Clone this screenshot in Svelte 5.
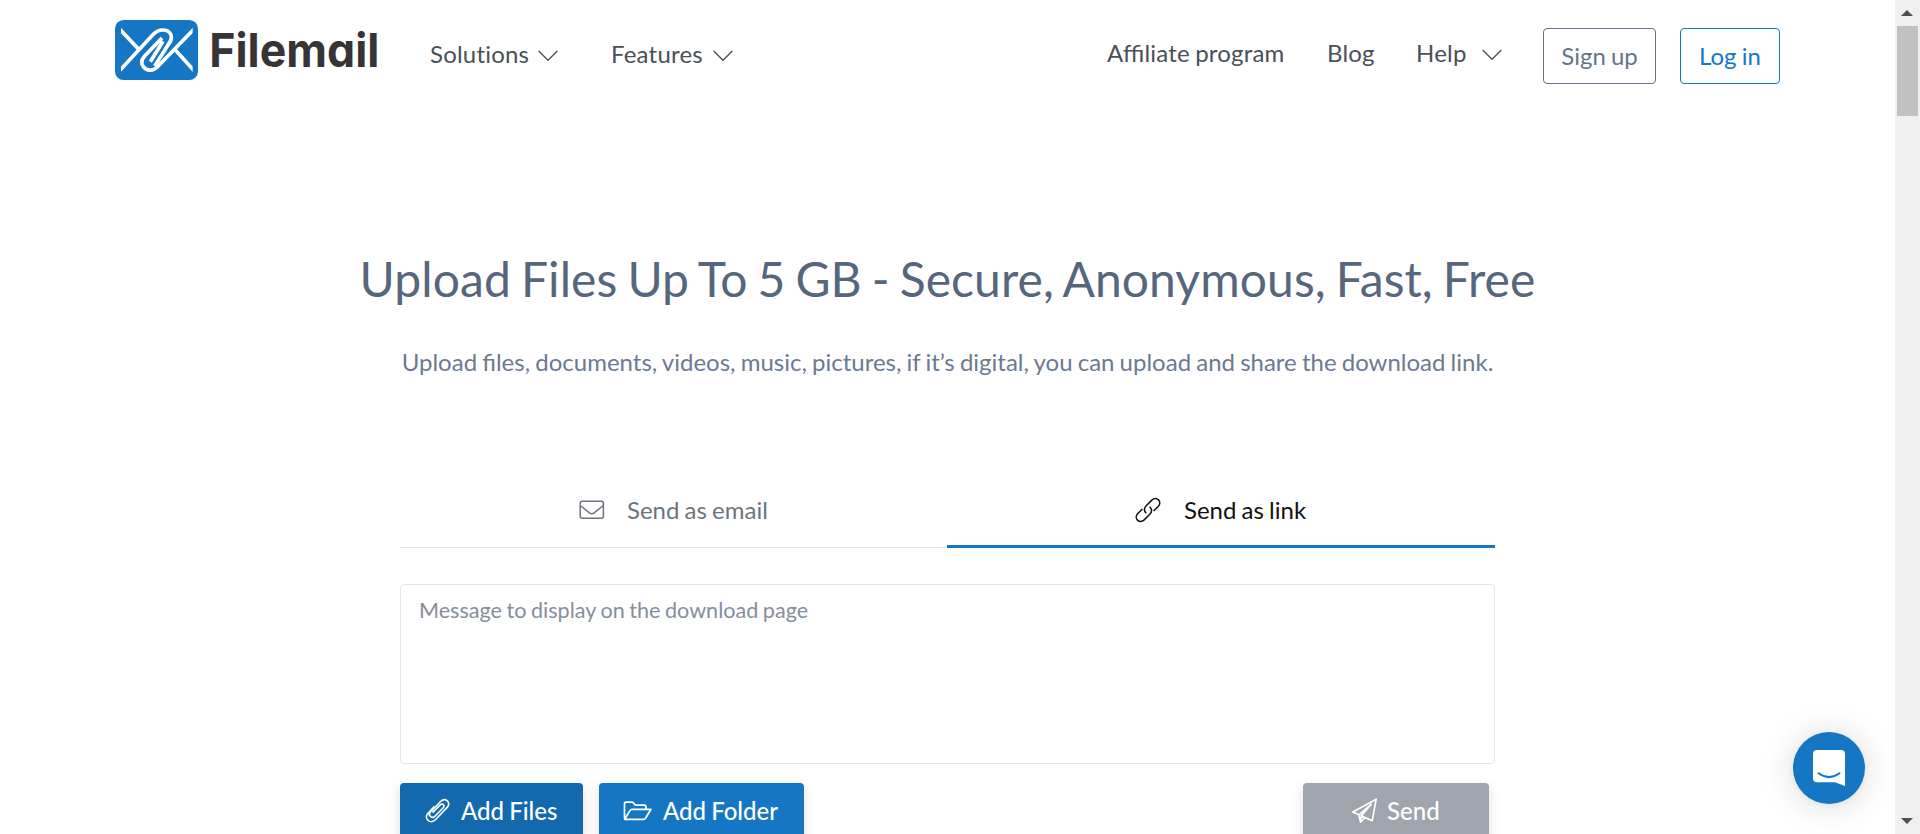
<script>
  const left = [
    { label: 'Solutions', cls: 'solutions' },
    { label: 'Features', cls: 'features' }
  ];
</script>

{#snippet chevron()}
  <svg class="chev" width="20" height="12" viewBox="0 0 20 12"><path d="M.7 1 10 10.3 19.3 1" /></svg>
{/snippet}

<div class="window">
  <main>
    <header>
      <svg class="logo" width="263" height="62" viewBox="45 60 789 186">
        <clipPath id="flaps"><rect x="63" y="70" width="215" height="160" /></clipPath>
        <rect x="45" y="60" width="249" height="180" rx="26" fill="#1577c4" />
        <g fill="none" stroke="#fff" stroke-width="11" clip-path="url(#flaps)">
          <path d="M56 84 116 148M56 215 160 103C176 86 201 86 211 101 218 113 213 124 204 135L164 198" />
          <path d="M285 84 172 201C159 214 139 213 130 200 122 189 125 178 134 168L186 114" />
          <path d="M224 148 285 215M151 185 189 124" />
        </g>
        <text x="328" y="202" textLength="510" lengthAdjust="spacingAndGlyphs">Filemail</text>
      </svg>
      <nav class="primary">
        {#each left as item}
          <a class={item.cls}>{item.label}{@render chevron()}</a>
        {/each}
      </nav>
      <nav class="secondary">
        <a class="aff">Affiliate program</a>
        <a class="blog">Blog</a>
        <a class="help">Help{@render chevron()}</a>
      </nav>
      <button class="outline signup">Sign up</button>
      <button class="outline login">Log in</button>
    </header>

    <h1>Upload Files Up To 5 GB - Secure, Anonymous, Fast, Free</h1>
    <p>Upload files, documents, videos, music, pictures, if it’s digital, you can upload and share the download link.</p>

    <section>
      <div class="tabs">
        <div class="tab email">
          <svg width="26" height="20" viewBox="0 0 26 20"><rect x="1.2" y="1.2" width="23.2" height="17" rx="2" /><path d="M1.2 5.5 10.4 12.8Q12.8 14.6 15.2 12.8L24.4 5.5" /></svg>
          <span>Send as email</span>
        </div>
        <div class="tab link">
          <svg width="26" height="26" viewBox="0 0 26 26"><path d="M11.2 16.2C8.8 13.7 9.1 10.9 11.2 8.8L16.8 3.1C19 1 21.8 1.2 23.5 2.9 25.2 4.6 25.2 7.3 23.4 9.2L18.6 14" /><path d="M14.6 9.8C17 12.2 16.9 15.1 14.8 17.2L9.2 22.9C7 25 4.2 24.8 2.5 23.1 .8 21.4 .8 18.7 2.6 16.8L7.4 12" /></svg>
          <span>Send as link</span>
        </div>
      </div>
      <div class="message">Message to display on the download page</div>
      <div class="actions">
        <button class="files">
          <svg width="26" height="26" viewBox="0 0 26 26"><path d="M7.5 14.8 15.4 6.9C17.8 4.7 20.7 7.5 18.5 9.8L10.1 18.4C6.6 21.8 2.2 17.5 5.6 14L15.7 3.4C20.6-1.2 27 4.4 22.8 9.2L10.4 22.2C4.8 27.5-2.1 20.7 3 15.2L9.5 8.4" transform="translate(.3 .2) scale(.97)" /></svg>
          <span>Add Files</span>
        </button>
        <button class="folder">
          <svg width="30" height="20" viewBox="0 0 30 20"><path d="M1.5 17.5V3Q1.5 1.2 3.2 1.2H9.5L12.5 4.2H21Q23 4.2 23 6V8M1.8 18 7 9.5Q7.6 8.3 9 8.3H28L22.5 17.2Q21.9 18.4 20.5 18.4H2.5Q1.5 18.4 1.5 17.4" /></svg>
          <span>Add Folder</span>
        </button>
        <button class="send">
          <svg width="27" height="26" viewBox="0 0 27 26"><path d="M25.2 1.2 1.8 14 7.8 16.8 20.3 6.2 10.2 17.9 21.2 22.7ZM7.8 16.8 9.6 24.2 14 19.5M10.2 17.9 9.6 24.2" /></svg>
          <span>Send</span>
        </button>
      </div>
    </section>
    <button class="chat" aria-label="Chat">
      <svg width="32" height="36" viewBox="0 0 32 36"><path d="M4 0H28Q32 0 32 4V36L22 32.3H4Q0 32.3 0 28.3V4Q0 0 4 0Z" fill="#fff" /><path d="M5.6 23.2Q16 31 26.4 23.2" fill="none" stroke="#1577c4" stroke-width="2" stroke-linecap="round" /></svg>
    </button>
  </main>
  <aside>
    <svg width="12" height="6" viewBox="0 0 12 6"><path d="M0 6 6 0 12 6Z" /></svg>
    <div class="thumb"></div>
    <svg class="down" width="12" height="6" viewBox="0 0 12 6"><path d="M0 0 6 6 12 0Z" /></svg>
  </aside>
</div>

<style>
  :global(body) { margin: 0; overflow: hidden; background: #fff; }
  .window { display: flex; width: 1920px; height: 834px; overflow: hidden; font-family: Lato, sans-serif; font-size: 24px; line-height: 30px; word-spacing: -1px; color: #495057; }
  main { position: relative; width: 1895px; height: 834px; overflow: hidden; }
  header { display: flex; align-items: flex-start; height: 114px; padding-left: 115px; white-space: nowrap; }
  .logo { margin-top: 20px; flex: none; overflow: visible; }
  .logo text { font: 700 141px Inter, sans-serif; font-feature-settings: "cv11" 1; fill: #373435; }
  nav { display: flex; letter-spacing: .2px; font-feature-settings: "liga" 0; }
  nav a { display: flex; align-items: flex-start; }
  .primary { margin: 39px 0 0 52px; }
  .solutions, .features { justify-content: space-between; }
  .solutions { width: 128px; }
  .features { width: 122px; margin-left: 53px; }
  .secondary { margin: 38px 0 0 374px; }
  .aff { width: 220px; font-feature-settings: "liga" 1; }
  .blog { width: 89px; }
  .help { width: 86px; justify-content: space-between; }
  .chev { margin-top: 11px; fill: none; stroke: #495057; stroke-width: 1.3; }
  button { font: 24px/30px Lato, sans-serif; word-spacing: -1px; border: 0; padding: 0; }
  .outline { box-sizing: border-box; height: 56px; margin-top: 28px; border: 1px solid; border-radius: 4px; background: #fff; }
  .signup { width: 113px; margin-left: 41px; color: #64748b; }
  .login { width: 100px; margin-left: 24px; color: #1577c4; }
  h1 { margin: 135px 0 0; text-align: center; font-size: 48px; font-weight: 400; line-height: 60px; word-spacing: -2.4px; letter-spacing: .1px; color: #56667c; white-space: nowrap; }
  p { margin: 38px 0 0; text-align: center; color: #6b7a90; white-space: nowrap; }
  section { width: 1095px; margin: 103px 0 0 400px; }
  .tabs { display: flex; height: 68px; }
  .tab { display: flex; box-sizing: border-box; height: 68px; padding-top: 15px; white-space: nowrap; }
  .tab svg { fill: none; stroke: currentColor; stroke-width: 1.5; flex: none; }
  .email { width: 547px; padding-left: 179px; border-bottom: 1px solid #e5e7e9; color: #6c757d; }
  .email svg { margin: 5px 22px 0 0; }
  .link { width: 548px; padding-left: 188px; border-bottom: 3px solid #1577c4; color: #111; }
  .link svg { margin: 2px 23px 0 0; }
  .message { box-sizing: border-box; height: 180px; margin-top: 36px; padding: 10px 18px; border: 1px solid #e3e5e7; border-radius: 4px; font-size: 21.6px; color: #868e9b; }
  .actions { display: flex; margin-top: 19px; }
  .actions button { display: flex; box-sizing: border-box; height: 58px; padding-top: 13px; border-radius: 4px; color: #fff; font-weight: 500; box-shadow: 0 4px 12px rgba(0,0,0,.13); white-space: nowrap; }
  .actions svg { fill: none; stroke: #fff; stroke-width: 1.7; stroke-linejoin: round; flex: none; }
  .files { width: 183px; padding-left: 25px; background: #1269ad; }
  .files svg { margin: 2px 10px 0 0; }
  .folder { width: 205px; margin-left: 16px; padding-left: 24px; background: #1577c4; }
  .folder svg { margin: 5px 10px 0 0; }
  .send { width: 186px; margin-left: 499px; padding-left: 48px; background: #9fa4ad; }
  .send svg { margin: 2px 9px 0 0; }
  .chat { position: absolute; left: 1793px; top: 732px; display: flex; align-items: center; justify-content: center; width: 72px; height: 72px; border-radius: 50%; background: #1577c4; box-shadow: 0 2px 36px rgba(0,0,0,.14), 0 1px 7px rgba(0,0,0,.06); }
  aside { display: flex; flex-direction: column; align-items: center; box-sizing: border-box; width: 25px; height: 834px; padding: 10px 1px 10px 0; background: #f0f0f0; fill: #505050; }
  .thumb { width: 21px; height: 90px; margin-top: 10px; background: #c1c1c1; }
  .down { margin-top: auto; }
</style>
